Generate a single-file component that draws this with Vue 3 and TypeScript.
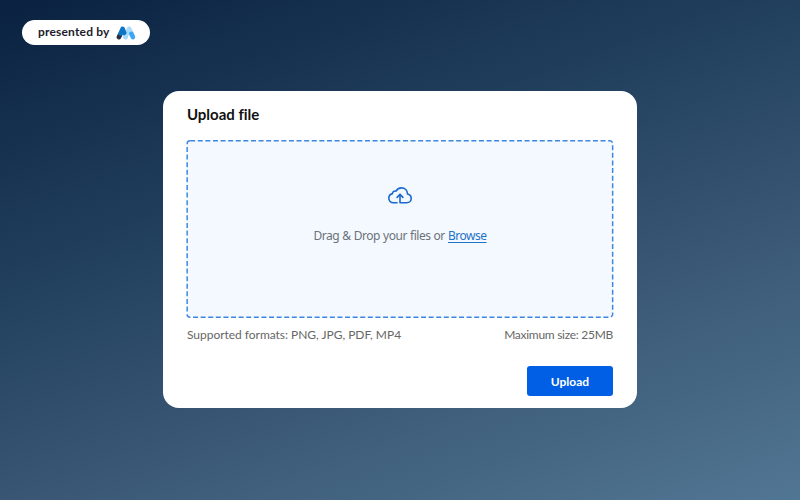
<script setup lang="ts">
  import { ref } from 'vue'

  const formats = ['PNG', 'JPG', 'PDF', 'MP4'];
  const maxSize = 25;

  const fileInput = ref<HTMLInputElement | null>(null);
  const files = ref<File[]>([]);

  const addFiles = (list: FileList | null | undefined) => {
    if (!list)
      return;
    files.value = Array.from(list).filter(f => f.size <= maxSize * 1024 * 1024);
  }

  const onDrop = (e: DragEvent) => {
    addFiles(e.dataTransfer?.files);
  }

  const onChange = (e: Event) => {
    addFiles((e.target as HTMLInputElement).files);
  }

  const upload = () => {
    files.value = [];
  }
</script>

<template>
  <div class="page">
    <header class="header">
      <div class="badge">
        <span class="badge-text">presented by</span>
        <svg class="logo" viewBox="0 0 20 14" width="20" height="14">
          <g fill="none" stroke-linecap="round" stroke-linejoin="round" stroke-width="4.6">
            <path d="M2.9 11.1 L4.2 8.6" stroke="#28303f" />
            <path d="M9.4 11 L13.2 2.9 L15.2 7.4" stroke="#a9dcfb" />
            <path d="M8 7.6 L9.6 11" stroke="#a9dcfb" />
            <path d="M4.6 7.4 L6.6 2.9 L8.2 6.8" stroke="#0d76c4" />
            <path d="M15.4 7.8 L16.9 11.1" stroke="#3ba6f5" />
          </g>
        </svg>
      </div>
    </header>

    <main class="card">
      <h1 class="title">Upload file</h1>
      <div class="dropzone" @dragover.prevent @drop.stop.prevent="onDrop">
        <!-- dashed frame, longer dashes than a css border gives -->
        <svg class="frame" viewBox="0 0 428 178" width="428" height="178">
          <rect x="1.15" y="0.75" width="425.5" height="176.5" rx="3" fill="#f3f9ff" stroke="#3e86e3" stroke-width="1.5" stroke-dasharray="5 2.6" />
        </svg>
        <svg class="cloud" viewBox="0 0 24 17" width="24" height="17">
          <g fill="none" stroke="#1b68cf" stroke-width="1.6" stroke-linecap="round" stroke-linejoin="round">
            <path d="M9 15.8 H5.4 C2.7 15.8 0.8 13.8 0.8 11.2 C0.8 8.8 2.4 7.1 4.5 6.6 C4.4 4.9 5.8 3.6 8 4.1 C9.2 2 11.1 0.9 13.3 0.9 C16.9 0.9 19.4 3.5 19.6 7.1 C21.8 7.7 23.2 9.3 23.2 11.5 C23.2 13.9 21.4 15.8 18.8 15.8 H12 V7.6" />
            <path d="M9.1 10.4 L12 7.4 L14.9 10.4" />
          </g>
        </svg>
        <p class="hint">Drag &amp; Drop your files or <a class="browse" @click="fileInput?.click()">Browse</a></p>
        <input ref="fileInput" class="file-input" type="file" multiple @change="onChange">
      </div>
      <div class="info">
        <span class="formats">Supported formats: {{ formats.join(', ') }}</span>
        <span class="size">Maximum size: {{ maxSize }}MB</span>
      </div>
      <div class="actions">
        <button class="upload-btn" @click="upload">Upload</button>
      </div>
    </main>
  </div>
</template>

<style>
  body {
    margin: 0;
  }
</style>

<style scoped>
  .page {
    box-sizing: border-box;
    height: 500px;
    padding: 20px 22px 0;
    background: linear-gradient(160deg, #0a2140 0%, #234260 39%, #3a5875 65%, #517693 100%);
    font-family: Lato, "Liberation Sans", sans-serif;
  }

  .header {
    display: flex;
    height: 71px;
    align-items: flex-start;
  }

  .badge {
    display: flex;
    align-items: center;
    box-sizing: border-box;
    width: 128px;
    height: 25px;
    padding-left: 16px;
    border-radius: 13px;
    background: #fff;
  }

  .badge-text {
    width: 78px;
    padding-bottom: 2px;
    color: #1b1b2b;
    font-size: 12px;
    font-weight: 700;
    line-height: 16px;
    letter-spacing: 0.18px;
    white-space: nowrap;
  }

  .card {
    box-sizing: border-box;
    width: 474px;
    height: 317px;
    margin: 0 auto;
    padding: 14px 24px 0;
    border-radius: 16px;
    background: #fff;
  }

  .title {
    margin: 0 0 17px;
    color: #111;
    font-size: 15px;
    font-weight: 700;
    line-height: 18px;
    letter-spacing: -0.02px;
  }

  .dropzone {
    position: relative;
    display: flex;
    flex-direction: column;
    align-items: center;
    box-sizing: border-box;
    height: 178px;
    padding-top: 47px;
  }

  .frame {
    position: absolute;
    top: 0;
    left: -1px;
  }

  .cloud,
  .hint {
    position: relative;
  }

  .hint {
    margin: 23px 0 0;
    color: #6d7278;
    font-family: "Noto Sans", sans-serif;
    font-size: 12px;
    line-height: 17px;
    letter-spacing: -0.5px;
    word-spacing: 0.6px;
    white-space: nowrap;
  }

  .browse {
    color: #1f72c8;
    text-decoration: underline;
    text-decoration-thickness: 1px;
    text-underline-offset: 2px;
    cursor: pointer;
  }

  .file-input {
    display: none;
  }

  .info {
    display: flex;
    justify-content: space-between;
    margin-top: 8px;
    color: #666;
    font-size: 12px;
    line-height: 17px;
    white-space: nowrap;
  }

  .formats {
    letter-spacing: -0.03px;
  }

  .size {
    letter-spacing: -0.28px;
  }

  .actions {
    display: flex;
    justify-content: flex-end;
    margin-top: 23px;
  }

  .upload-btn {
    width: 86px;
    height: 30px;
    padding: 0;
    border: none;
    border-radius: 3px;
    background: #005fe5;
    color: #fff;
    font-family: inherit;
    font-size: 12px;
    font-weight: 700;
    cursor: pointer;
  }
</style>
